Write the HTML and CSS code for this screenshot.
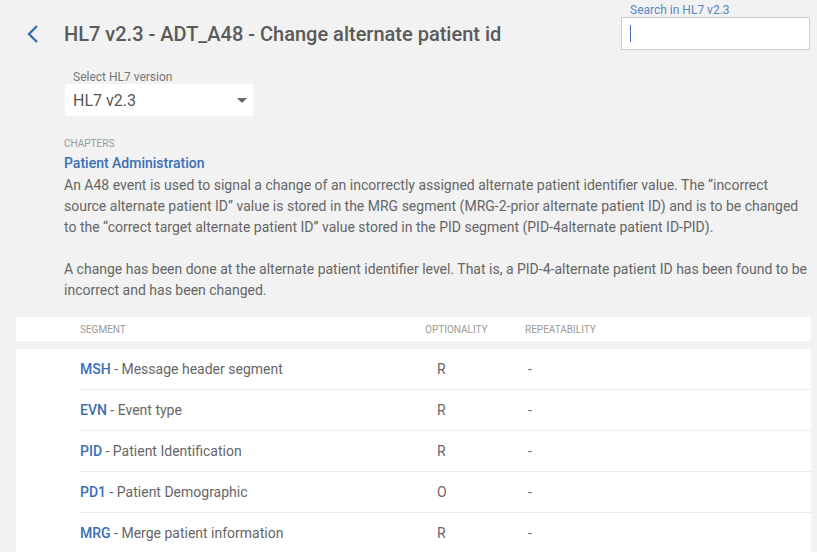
FILE: index.html
```html
<!DOCTYPE html>
<html>
<head>
<meta charset="utf-8">
<link rel="stylesheet" href="styles.css">
</head>
<body>
<div class="page">
  <header class="top">
    <div class="title-wrap">
      <a class="back" href="#"><svg width="14" height="20" viewBox="0 0 14 20"><path d="M11 2 L3 10 L11 18" fill="none" stroke="#3b6fb4" stroke-width="2.4"/></svg></a>
      <h1 class="title">HL7 v2.3 - ADT_A48 - Change alternate patient id</h1>
    </div>
    <div class="search">
      <label class="search-label">Search in HL7 v2.3</label>
      <div class="search-box"><span class="caret"></span></div>
    </div>
  </header>

  <div class="version">
    <div class="version-label">Select HL7 version</div>
    <div class="version-select"><span>HL7 v2.3</span><span class="arrow"></span></div>
  </div>

  <section class="chapter">
    <div class="chapter-label">CHAPTERS</div>
    <div class="chapter-name">Patient Administration</div>
    <p class="desc">An A48 event is used to signal a change of an incorrectly assigned alternate patient identifier value. The “incorrect source alternate patient ID” value is stored in the MRG segment (MRG-2-prior alternate patient ID) and is to be changed to the “correct target alternate patient ID” value stored in the PID segment (PID-4alternate patient ID-PID).</p>
    <p class="desc">A change has been done at the alternate patient identifier level. That is, a PID-4-alternate patient ID has been found to be incorrect and has been changed.</p>
  </section>

  <div class="table">
    <div class="thead">
      <div class="th seg">SEGMENT</div>
      <div class="th opt">OPTIONALITY</div>
      <div class="th rep">REPEATABILITY</div>
    </div>
    <div class="tbody">
      <div class="tr"><div class="seg"><b>MSH</b> - Message header segment</div><div class="opt">R</div><div class="rep">-</div></div>
      <div class="tr"><div class="seg"><b>EVN</b> - Event type</div><div class="opt">R</div><div class="rep">-</div></div>
      <div class="tr"><div class="seg"><b>PID</b> - Patient Identification</div><div class="opt">R</div><div class="rep">-</div></div>
      <div class="tr"><div class="seg"><b>PD1</b> - Patient Demographic</div><div class="opt">O</div><div class="rep">-</div></div>
      <div class="tr"><div class="seg"><b>MRG</b> - Merge patient information</div><div class="opt">R</div><div class="rep">-</div></div>
    </div>
  </div>
</div>
</body>
</html>
```
FILE: styles.css
```css
* { box-sizing: border-box; }
html, body { margin: 0; padding: 0; }
body {
  background: #f2f2f2;
  font-family: Roboto, "Liberation Sans", sans-serif;
  color: #666;
  overflow: hidden;
}
.page { width: 817px; }

.top {
  display: flex;
  justify-content: space-between;
  align-items: flex-start;
  padding: 0 7px 0 26px;
  height: 60px;
}
.title-wrap {
  display: flex;
  align-items: center;
  padding-top: 22px;
}
.back { display: block; width: 14px; height: 20px; margin-right: 24px; }
.back svg { display: block; }
.title {
  margin: 0;
  font-size: 20px;
  font-weight: 500;
  color: #5a5a5a;
  line-height: 24px;
}
.search { width: 189px; padding-top: 4px; }
.search-label {
  display: block;
  font-size: 12px;
  line-height: 13px;
  color: #5b85c0;
  padding-left: 9px;
}
.search-box {
  height: 33px;
  background: #fff;
  border: 1px solid #ccc;
  padding: 7px 0 0 8px;
}
.caret { display: block; width: 1px; height: 17px; background: #3b6fb4; }

.version { padding-left: 65px; }
.version-label {
  font-size: 12px;
  line-height: 14px;
  color: #777;
  padding-left: 8px;
  margin-top: 10px;
}
.version-select {
  width: 188px;
  height: 32px;
  background: #fff;
  display: flex;
  align-items: center;
  justify-content: space-between;
  padding: 0 6px 0 8px;
  font-size: 16px;
  color: #555;
}
.arrow {
  width: 0; height: 0;
  border-left: 5px solid transparent;
  border-right: 5px solid transparent;
  border-top: 5px solid #666;
}

.chapter { padding: 22px 6px 0 64px; }
.chapter-label {
  font-size: 10px;
  line-height: 12px;
  color: #999;
}
.chapter-name {
  font-size: 14px;
  font-weight: 500;
  color: #3b6fb4;
  line-height: 18px;
  margin-top: 4px;
}
.desc {
  margin: 3px 0 21px;
  font-size: 14px;
  line-height: 21px;
  color: #666;
}
.desc + .desc { margin-top: 0; margin-bottom: 0; }

.table { margin: 16px 6px 0 16px; }
.thead {
  display: flex;
  background: #fff;
  height: 24px;
  align-items: center;
  padding-left: 64px;
  font-size: 10px;
  color: #999;
}
.seg { width: 345px; }
.opt { width: 100px; }
.rep { flex: 1; }
.tbody { background: #fff; margin-top: 8px; padding-left: 64px; }
.tr {
  display: flex;
  align-items: center;
  height: 41px;
  border-bottom: 1px solid #ebebeb;
  font-size: 14px;
  color: #666;
}
.tr .seg b { color: #3b6fb4; font-weight: 500; }
.tr .opt { padding-left: 12px; }
.tr .rep { padding-left: 3px; }
```
